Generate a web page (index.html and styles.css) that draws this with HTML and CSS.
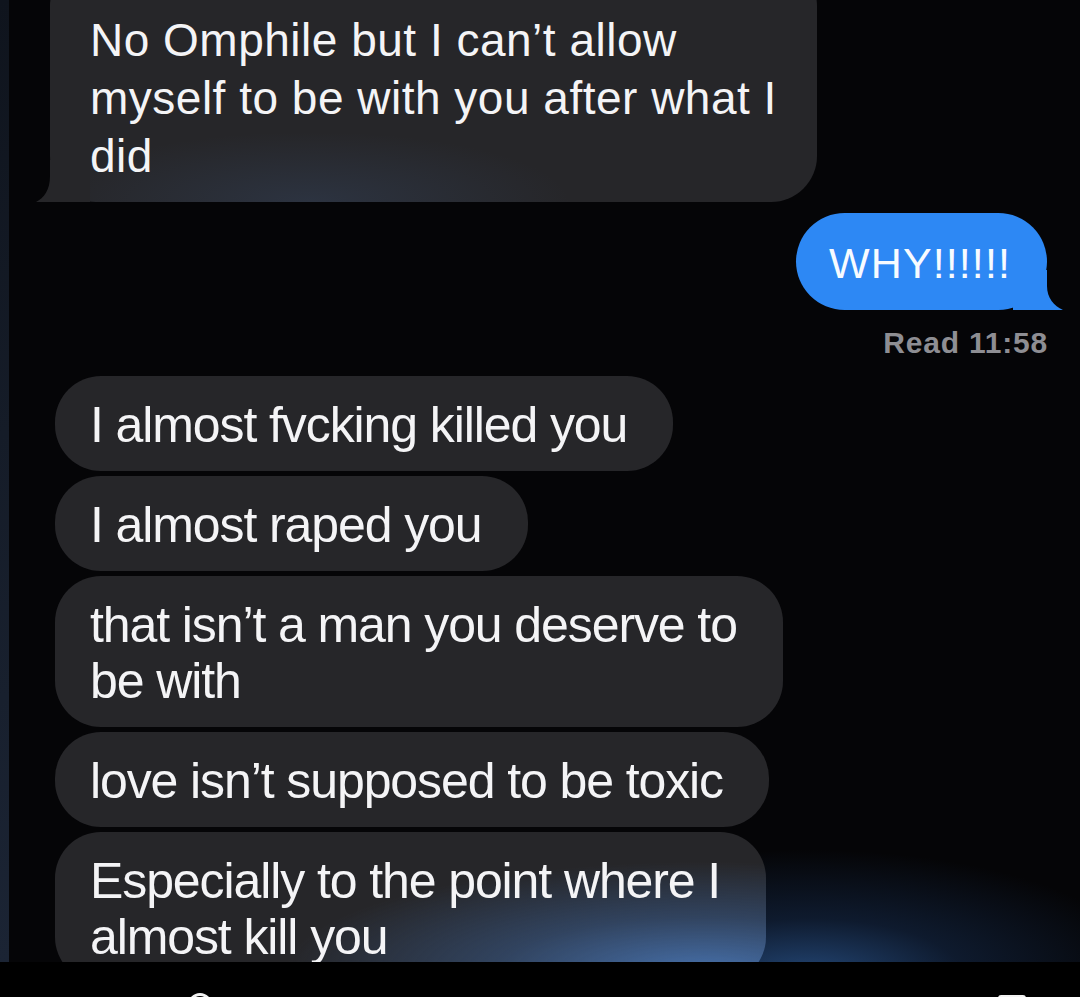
FILE: index.html
```html
<!DOCTYPE html>
<html lang="en">
<head>
<meta charset="utf-8">
<title>Messages</title>
<link rel="stylesheet" href="styles.css">
</head>
<body>
<div class="screen">
  <div class="strip"></div>
  <div class="chat">
    <div class="bubble recv first">No Omphile but I can’t allow<br>myself to be with you after what I<br>did<svg class="tail tail-left" width="54" height="42" viewBox="0 0 54 42" aria-hidden="true"><path d="M14 0 L14 16 C14 30 8 38 0 42 L54 42 L54 0 Z"/></svg></div>
    <div class="bubble sent">WHY!!!!!!<svg class="tail tail-right" width="50" height="40" viewBox="0 0 50 40" aria-hidden="true"><path d="M34 0 L34 16 C34 28 41 36 50 40 L0 40 L0 0 Z"/></svg></div>
    <div class="receipt">Read 11:58</div>
    <div class="bubble recv lower">I almost fvcking killed you</div>
    <div class="bubble recv lower">I almost raped you</div>
    <div class="bubble recv lower">that isn’t a man you deserve to<br>be with</div>
    <div class="bubble recv lower">love isn’t supposed to be toxic</div>
    <div class="bubble recv lower glow">Especially to the point where I<br>almost kill you</div>
  </div>
</div>
<div class="footer">
  <span class="mark-circle"></span>
  <span class="mark-rect"></span>
</div>
</body>
</html>
```

FILE: styles.css
```css
html, body {
  margin: 0;
  padding: 0;
  background: #000;
}

body {
  width: 1080px;
  height: 997px;
  overflow: hidden;
  font-family: "Liberation Sans", Arial, sans-serif;
  color: #f4f4f6;
}

.screen {
  display: flex;
  height: 962px;
  overflow: hidden;
}

.strip {
  width: 9px;
  flex: 0 0 9px;
  background: linear-gradient(180deg, #0f141d 0%, #151c28 45%, #1b2434 100%);
}

.chat {
  flex: 1;
  display: flex;
  flex-direction: column;
  align-items: flex-start;
  overflow: hidden;
  background:
    radial-gradient(ellipse 340px 125px at 800px 975px, rgba(36, 72, 120, 0.95) 0%, rgba(22, 44, 78, 0.55) 45%, rgba(5, 5, 7, 0) 100%),
    #050507;
}

.bubble {
  position: relative;
  white-space: nowrap;
  border-radius: 46px;
}

.recv {
  background: #262629;
}

.first {
  margin-top: -40px;
  margin-left: 41px;
  padding: 51px 40px 17px 40px;
  font-size: 46px;
  line-height: 58px;
  letter-spacing: 0.5px;
  background:
    radial-gradient(ellipse 260px 70px at 260px 100%, rgba(60, 85, 125, 0.28), rgba(60, 85, 125, 0) 100%),
    #262629;
}

.sent {
  align-self: flex-end;
  margin-top: 11px;
  margin-right: 33px;
  padding: 22px 36px 19px 33px;
  font-size: 43px;
  line-height: 56px;
  letter-spacing: 1.1px;
  color: #f7fbff;
  background: #2d88f4;
  border-radius: 49px;
}

.tail {
  position: absolute;
  bottom: 0;
  display: block;
}

.tail-left {
  left: -14px;
  fill: #262629;
}

.tail-right {
  right: -16px;
  fill: #2d88f4;
}

.receipt {
  align-self: flex-end;
  margin-top: 15px;
  margin-right: 32px;
  font-size: 30px;
  line-height: 36px;
  font-weight: 700;
  letter-spacing: 0.8px;
  color: #8e8e93;
}

.lower {
  margin-left: 46px;
  margin-top: 5px;
  padding: 21px 46px 18px 35px;
  font-size: 50px;
  line-height: 56px;
  letter-spacing: -1.1px;
}

.receipt + .lower {
  margin-top: 15px;
}

.glow {
  background:
    radial-gradient(ellipse 420px 110px at 650px 140px, rgba(74, 120, 184, 0.9) 0%, rgba(60, 96, 148, 0.5) 50%, rgba(60, 95, 145, 0) 100%),
    #262629;
}

.footer {
  height: 35px;
  display: flex;
  justify-content: space-between;
  align-items: flex-start;
  padding: 0 54px 0 188px;
  overflow: hidden;
  background: #000;
}

.mark-circle {
  width: 18px;
  height: 18px;
  margin-top: 31px;
  border: 3px solid #f2f2f2;
  border-radius: 50%;
}

.mark-rect {
  width: 28px;
  height: 20px;
  margin-top: 33px;
  background: #f2f2f2;
  border-radius: 3px;
}
```
